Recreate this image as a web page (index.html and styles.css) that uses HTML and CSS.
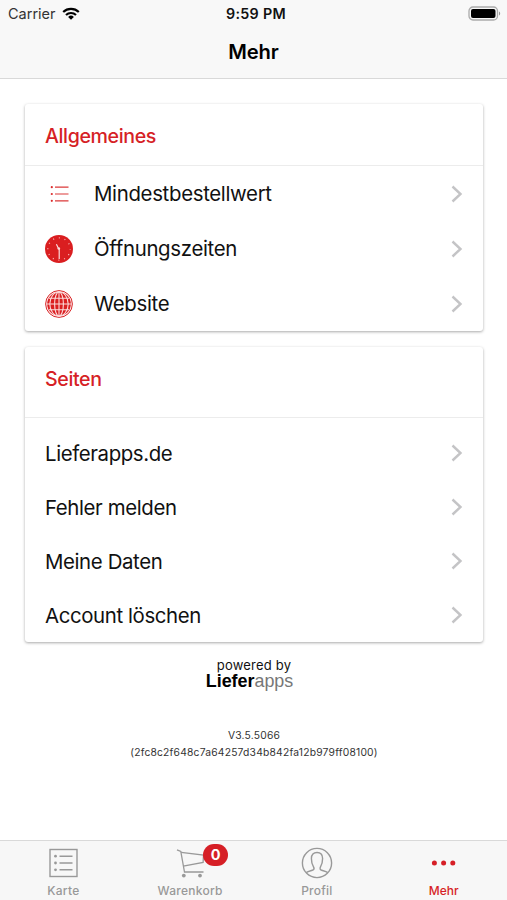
FILE: index.html
```html
<!DOCTYPE html>
<html lang="de">
<head>
<meta charset="utf-8">
<meta name="viewport" content="width=device-width, initial-scale=1">
<title>Mehr</title>
<link rel="stylesheet" href="styles.css">
</head>
<body>
<svg class="defs" aria-hidden="true">
  <symbol id="chevron" viewBox="0 0 12 18"><path d="M1.5 1.5 9.5 9l-8 7.5" fill="none" stroke="#c4c4c6" stroke-width="2.4"/></symbol>
</svg>
<header class="top">
  <div class="status">
    <div class="carrier"><span>Carrier</span>
      <svg width="18" height="13" viewBox="0 0 18 13"><g fill="none" stroke="#000" stroke-width="2.2"><path d="M1.2 5a11.2 11.2 0 0 1 15.6 0"/><path d="M4 8a7.2 7.2 0 0 1 10 0"/></g><path d="M6.1 9.9a4.2 4.2 0 0 1 5.8 0L9 12.8z"/></svg>
    </div>
    <time class="clock">9:59 PM</time>
    <svg class="battery" width="33" height="15" viewBox="0 0 33 15"><rect x="1" y="1" width="28.5" height="13" rx="4" fill="#f8f8f8" stroke="#aaa" stroke-width="1.3"/><rect x="3" y="3" width="24.5" height="9" rx="2"/><path d="M31 5.5c1.6.7 1.6 3.3 0 4z" fill="#999"/></svg>
  </div>
  <h1 class="title">Mehr</h1>
</header>
<main class="content">
  <section class="card">
    <h2 class="card-head">Allgemeines</h2>
    <ul class="rows">
      <li class="row">
        <svg class="icon" viewBox="0 0 28 28"><g fill="none" stroke="#dc3a3a" stroke-width="1.2"><path d="M10 7.2h13.5M10 14h13.5M10 20.8h13.5"/></g><g fill="#dc2a2a"><circle cx="6.8" cy="7.2" r="1.1"/><circle cx="6.8" cy="14" r="1.1"/><circle cx="6.8" cy="20.8" r="1.1"/></g></svg>
        <span class="label">Mindestbestellwert</span><svg class="chev"><use href="#chevron"/></svg></li>
      <li class="row">
        <svg class="icon" viewBox="0 0 28 28"><circle cx="14" cy="14" r="14" fill="#da1e20"/><circle cx="14" cy="14" r="11.2" fill="none" stroke="#f7b5b5" stroke-width="1.3" stroke-dasharray="1 4.864" stroke-dashoffset=".5"/><path d="m11.4 9.2 2.1 4.2M14.2 13v11" fill="none" stroke="#fbdada" stroke-width="1.2"/><circle cx="13.8" cy="13.5" r="1.3" fill="#fbdada"/></svg>
        <span class="label">Öffnungszeiten</span><svg class="chev"><use href="#chevron"/></svg></li>
      <li class="row">
        <svg class="icon" viewBox="0 0 28 28"><circle cx="14" cy="14" r="13.4" fill="#fbe4e4" stroke="#da2a2c" stroke-width="1"/><circle cx="14" cy="14" r="11.8" fill="#da1e20"/><g fill="none" stroke="#fbdada" stroke-width="1.1"><ellipse cx="14" cy="14" rx="4.4" ry="12"/><ellipse cx="14" cy="14" rx="9.2" ry="12"/><path d="M14 2v24M2 14h24M4 8.2h20M4 19.8h20"/></g></svg>
        <span class="label">Website</span><svg class="chev"><use href="#chevron"/></svg></li>
    </ul>
  </section>
  <section class="card pages">
    <h2 class="card-head">Seiten</h2>
    <ul class="rows">
      <li class="row"><span class="label">Lieferapps.de</span><svg class="chev"><use href="#chevron"/></svg></li>
      <li class="row"><span class="label">Fehler melden</span><svg class="chev"><use href="#chevron"/></svg></li>
      <li class="row"><span class="label">Meine Daten</span><svg class="chev"><use href="#chevron"/></svg></li>
      <li class="row"><span class="label">Account löschen</span><svg class="chev"><use href="#chevron"/></svg></li>
    </ul>
  </section>
  <footer class="about">
    <p class="powered">powered by</p>
    <p class="brand"><b>Liefer</b><span>apps</span></p>
    <p class="version">V3.5.5066<br>(2fc8c2f648c7a64257d34b842fa12b979ff08100)</p>
  </footer>
</main>
<nav class="tabs">
  <a class="tab"><svg width="32" height="32" viewBox="0 0 32 32"><g fill="none" stroke="#999" stroke-width="1.4"><rect x="3" y="2.5" width="27" height="27"/><path d="M12.5 9.2h13M12.5 16h13M12.5 22.8h13"/></g><g fill="#999"><circle cx="8.5" cy="9.2" r="1.4"/><circle cx="8.5" cy="16" r="1.4"/><circle cx="8.5" cy="22.8" r="1.4"/></g></svg><span>Karte</span></a>
  <a class="tab"><span class="cart"><svg width="32" height="32" viewBox="0 0 32 32"><g fill="none" stroke="#999" stroke-width="1.3"><path d="M3 2.8l3.8 1.7L10.5 25H29.5"/><path d="M7.1 5.3 29.5 8l-.4 7.5L9.2 19.2"/></g><g fill="#999"><circle cx="9.8" cy="28.6" r="1.9"/><circle cx="26" cy="28.6" r="1.9"/></g></svg><b class="badge">0</b></span><span>Warenkorb</span></a>
  <a class="tab"><svg width="32" height="32" viewBox="0 0 32 32"><g fill="none" stroke="#999" stroke-width="1.4"><circle cx="16" cy="16" r="14.6"/><path d="M5.2 25.6c2.6-1.7 5.5-1.8 7-2.7 1-.6.8-2.3.2-3.3-1.6-2.7-2-5.2-2-8.2 0-3.6 2.1-5.9 5.6-5.9s5.6 2.3 5.6 5.9c0 3-.4 5.5-2 8.2-.6 1-.8 2.7.2 3.3 1.5.9 4.4 1 7 2.7"/></g></svg><span>Profil</span></a>
  <a class="tab active"><svg width="32" height="32" viewBox="0 0 32 32"><g fill="#d61f26"><circle cx="6.4" cy="16" r="2.5"/><circle cx="15.6" cy="16" r="2.5"/><circle cx="24.8" cy="16" r="2.5"/></g></svg><span>Mehr</span></a>
</nav>
</body>
</html>
```
FILE: styles.css
```css
* { box-sizing: border-box; margin: 0; padding: 0; }
body {
  height: 900px;
  display: flex;
  flex-direction: column;
  background: #fff;
  color: #111;
  font-family: Inter, "Liberation Sans", sans-serif;
  overflow: hidden;
}
svg { display: block; flex: none; }
ul { list-style: none; }
.defs { position: absolute; width: 0; height: 0; }

.top { height: 79px; background: #f8f8f8; border-bottom: 1px solid #d9d9d9; }
.status {
  height: 27px;
  padding: 0 6px 0 8px;
  display: grid;
  grid-template-columns: 1fr auto 1fr;
  align-items: center;
}
.carrier { display: flex; align-items: center; gap: 6px; font-size: 14.5px; color: #333; }
.clock { font-size: 14.3px; font-weight: 600; margin-left: 3px; letter-spacing: .3px; }
.battery { justify-self: end; }
.title { height: 50px; line-height: 50px; text-align: center; font-size: 20.2px; font-weight: 600; color: #000; letter-spacing: -.1px; }

.content { flex: 1; padding: 25px 24px 0 25px; }
.card { background: #fff; border-radius: 3px; box-shadow: 0 1px 3px rgba(0,0,0,.34); margin-bottom: 16px; }
.card-head {
  height: 62px;
  line-height: 64px;
  padding-left: 20px;
  border-bottom: 1px solid #ececec;
  color: #d61f26;
  font-size: 19.6px;
  font-weight: 500;
  letter-spacing: -.38px;
}
.row { height: 55px; display: flex; align-items: center; padding: 0 20px; font-size: 20.4px; letter-spacing: -.32px; }
.icon { width: 28px; height: 28px; margin-right: 21px; }
.label { flex: 1; }
.chev { width: 12px; height: 18px; }
.pages .card-head { height: 71px; line-height: 64px; }
.pages .rows { padding-top: 8px; }
.pages .row { height: 54px; letter-spacing: -.38px; }

.about { text-align: center; }
.powered { margin-top: -1px; font-size: 13px; line-height: 16px; letter-spacing: .2px; }
.brand { padding-right: 9px; font-family: "Liberation Sans", sans-serif; font-size: 17.9px; line-height: 17px; color: #000; }
.brand span { color: #777; }
.version { margin-top: 37px; font-size: 10.3px; line-height: 17px; letter-spacing: .2px; color: #333; }

.tabs {
  height: 60px;
  display: grid;
  grid-template-columns: repeat(4, 1fr);
  background: #f7f7f7;
  border-top: 1px solid #d9d9d9;
}
.tab { display: flex; flex-direction: column; align-items: center; padding-top: 6px; font-size: 12px; font-weight: 500; line-height: 24px; letter-spacing: .25px; color: #999; }
.tab.active { color: #d61f26; letter-spacing: 0; }
.cart { position: relative; }
.badge {
  position: absolute;
  left: 29px;
  top: -3px;
  width: 25px;
  height: 22px;
  border-radius: 11px;
  background: #d61f26;
  color: #fff;
  font-size: 14.5px;
  font-weight: 700;
  line-height: 22px;
  letter-spacing: 0;
  text-align: center;
}
```
